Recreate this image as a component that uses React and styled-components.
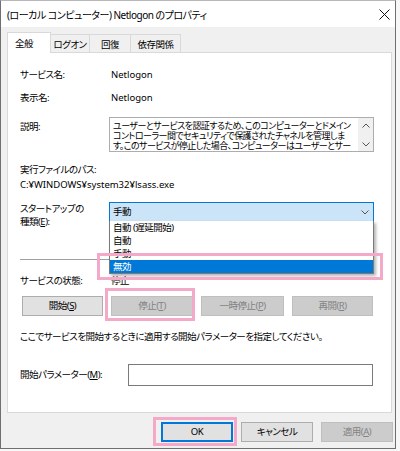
import React from "react";
import styled, { createGlobalStyle } from "styled-components";

const Page = createGlobalStyle`
  body {
    margin: 0;
    background: #f7f7f7;
    font-family: "Noto Sans", "Noto Sans CJK JP", sans-serif;
    font-size: 9.5px;
    letter-spacing: -0.5px;
    font-feature-settings: "palt";
    color: #000;
  }
`;

const Screen = styled.div`
  position: relative;
  width: 400px;
  height: 451px;
  overflow: hidden;
`;

const Window = styled.div`
  width: 396px;
  height: 449px;
  box-sizing: border-box;
  border: 1px solid #6f6f6f;
  border-top-color: #b8b8b8;
  display: flex;
  flex-direction: column;
  background: #f0f0f0;
`;

const TitleBar = styled.div`
  height: 26px;
  background: #fff;
  display: flex;
  align-items: center;
  justify-content: space-between;
  padding: 0 5px 0 6px;
  flex-shrink: 0;
`;

const Title = styled.span`
  font-size: 10px;
  line-height: 14px;
  margin-top: 1px;
`;

const Body = styled.div`
  flex: 1;
  display: flex;
  flex-direction: column;
  padding: 5px 2px 0 6px;
`;

const Tabs = styled.div`
  display: flex;
  align-items: flex-end;
  height: 20px;
  position: relative;
  z-index: 1;
`;

const Tab = styled.div`
  width: ${(p) => p.$w}px;
  height: ${(p) => (p.$active ? 21 : 18)}px;
  margin-bottom: ${(p) => (p.$active ? -1 : 0)}px;
  margin-left: ${(p) => (p.$first ? 0 : -1)}px;
  box-sizing: border-box;
  border: 1px solid #d9d9d9;
  border-bottom: none;
  background: ${(p) => (p.$active ? "#fff" : "#f0f0f0")};
  display: flex;
  align-items: center;
  justify-content: ${(p) => (p.$active ? "flex-start" : "center")};
  padding-left: ${(p) => (p.$active ? 7 : 0)}px;
  padding-bottom: ${(p) => (p.$active ? 1 : 0)}px;
  position: relative;
  z-index: ${(p) => (p.$active ? 2 : 1)};
`;

const Panel = styled.div`
  width: 385px;
  height: 361px;
  box-sizing: border-box;
  border: 1px solid #d9d9d9;
  background: #fff;
  padding: 15px 0 0 12px;
  display: flex;
  flex-direction: column;
`;

const Row = styled.div`
  display: flex;
  align-items: ${(p) => p.$align || "center"};
  margin-top: ${(p) => p.$mt || 0}px;
  line-height: 14px;
  position: relative;
`;

const Label = styled.span`
  width: ${(p) => p.$w || 89}px;
  flex-shrink: 0;
  line-height: ${(p) => p.$lh || 14}px;
  padding-top: ${(p) => p.$pt || 0}px;
`;

const Value = styled.span`
  padding-left: 2px;
  letter-spacing: ${(p) => (p.$latin ? "0" : "-0.5px")};
`;

const PathText = styled.div`
  margin-top: 1px;
  line-height: 14px;
  letter-spacing: 0;
`;

const U = styled.span`
  text-decoration: underline;
  text-underline-offset: 1px;
`;

const TextArea = styled.div`
  width: 265px;
  height: 35px;
  box-sizing: border-box;
  border: 1px solid #abadb3;
  display: flex;
`;

const TextLines = styled.div`
  flex: 1;
  padding: 3px 0 0 3px;
  font-size: 9px;
  letter-spacing: -0.55px;
  line-height: 10px;
  white-space: pre;
  overflow: hidden;
`;

const ScrollBar = styled.div`
  width: 15px;
  background: #f0f0f0;
  display: flex;
  flex-direction: column;
  align-items: center;
  justify-content: space-between;
  padding: 5px 0 4px;
`;

const Combo = styled.div`
  width: 265px;
  height: 20px;
  box-sizing: border-box;
  border: 1px solid #0078d7;
  background: #cce4f7;
  display: flex;
  align-items: center;
  justify-content: space-between;
  padding: 0 4px 0 3px;
`;

const DropList = styled.div`
  position: absolute;
  left: 89px;
  top: 19px;
  width: 265px;
  box-sizing: border-box;
  border: 1px solid #7a7a7a;
  border-top: none;
  background: #fff;
  box-shadow: 2px 2px 3px rgba(0, 0, 0, 0.3);
  z-index: 3;
`;

const Option = styled.div`
  height: 13px;
  line-height: 13px;
  padding-left: 3px;
  background: ${(p) => (p.$selected ? "#0078d7" : "transparent")};
  color: ${(p) => (p.$selected ? "#fff" : "#000")};
`;

const Separator = styled.div`
  width: 353px;
  height: 1px;
  background: #a0a0a0;
  margin-top: 31px;
`;

const ButtonRow = styled.div`
  display: flex;
  justify-content: space-between;
  width: 351px;
  margin: 8px 0 0 2px;
`;

const Button = styled.div`
  width: ${(p) => p.$w}px;
  height: 20px;
  box-sizing: border-box;
  border: 1px solid ${(p) => (p.$default ? "#0078d7" : p.$disabled ? "#bfbfbf" : "#adadad")};
  box-shadow: ${(p) => (p.$default ? "inset 0 0 0 1px #0078d7" : "none")};
  background: ${(p) => (p.$disabled ? "#cccccc" : "#e1e1e1")};
  color: ${(p) => (p.$disabled ? "#838383" : "#000")};
  display: flex;
  align-items: center;
  justify-content: center;
  line-height: 14px;
`;

const Hint = styled.div`
  margin-top: 14px;
  line-height: 14px;
`;

const Input = styled.div`
  width: 245px;
  height: 22px;
  box-sizing: border-box;
  border: 1px solid #7a7a7a;
  background: #fff;
`;

const Footer = styled.div`
  display: flex;
  justify-content: flex-end;
  gap: 8px;
  margin-top: 9px;
`;

const Mark = styled.div`
  position: absolute;
  left: ${(p) => p.$x}px;
  top: ${(p) => p.$y}px;
  width: ${(p) => p.$w}px;
  height: ${(p) => p.$h}px;
  box-sizing: border-box;
  border: 3px solid #f4a9c8;
  z-index: 10;
  pointer-events: none;
`;

const Chevron = ({ up }) => (
  <svg width="8" height="5" viewBox="0 0 8 5">
    <path
      d={up ? "M0.5 4.5 L4 1 L7.5 4.5" : "M0.5 0.5 L4 4 L7.5 0.5"}
      fill="none"
      stroke="#555"
      strokeWidth="1"
    />
  </svg>
);

const CloseIcon = () => (
  <svg width="11" height="11" viewBox="0 0 11 11">
    <path d="M0.5 0.5 L10.5 10.5 M10.5 0.5 L0.5 10.5" stroke="#111" strokeWidth="1" />
  </svg>
);

const description =
  "ユーザーとサービスを認証するため、このコンピューターとドメイン\nコントローラー間でセキュリティで保護されたチャネルを管理しま\nす。このサービスが停止した場合、コンピューターはユーザーとサー";

const startupOptions = ["自動 (遅延開始)", "自動", "手動", "無効"];

export default function App() {
  return (
    <Screen>
      <Page />
      <Window>
        <TitleBar>
          <Title>(ローカル コンピューター) Netlogon のプロパティ</Title>
          <CloseIcon />
        </TitleBar>
        <Body>
          <Tabs>
            <Tab $active $first $w={44}>全般</Tab>
            <Tab $w={40}>ログオン</Tab>
            <Tab $w={42}>回復</Tab>
            <Tab $w={51}>依存関係</Tab>
          </Tabs>
          <Panel>
            <Row>
              <Label>サービス名:</Label>
              <Value $latin>Netlogon</Value>
            </Row>
            <Row $mt={9}>
              <Label>表示名:</Label>
              <Value $latin>Netlogon</Value>
            </Row>
            <Row $mt={12} $align="flex-start">
              <Label $pt={3}>説明:</Label>
              <TextArea>
                <TextLines>{description}</TextLines>
                <ScrollBar>
                  <Chevron up />
                  <Chevron />
                </ScrollBar>
              </TextArea>
            </Row>
            <Row $mt={11}>
              <Label $w={200}>実行ファイルのパス:</Label>
            </Row>
            <PathText>C:¥WINDOWS¥system32¥lsass.exe</PathText>
            <Row $mt={10} $align="flex-start">
              <Label $lh={13}>
                スタートアップの
                <br />
                種類(<U>E</U>):
              </Label>
              <Combo>
                <span>手動</span>
                <Chevron />
              </Combo>
              <DropList>
                {startupOptions.map((o) => (
                  <Option key={o} $selected={o === "無効"}>
                    {o}
                  </Option>
                ))}
              </DropList>
            </Row>
            <Separator />
            <Row $mt={14}>
              <Label>サービスの状態:</Label>
              <Value>停止</Value>
            </Row>
            <ButtonRow>
              <Button $w={81}>
                開始(<U>S</U>)
              </Button>
              <Button $w={82} $disabled>
                停止(<U>T</U>)
              </Button>
              <Button $w={83} $disabled>
                一時停止(<U>P</U>)
              </Button>
              <Button $w={81} $disabled>
                再開(<U>R</U>)
              </Button>
            </ButtonRow>
            <Hint>ここでサービスを開始するときに適用する開始パラメーターを指定してください。</Hint>
            <Row $mt={20}>
              <Label $w={108}>
                開始パラメーター(<U>M</U>):
              </Label>
              <Input />
            </Row>
          </Panel>
          <Footer>
            <Button $w={72} $default>OK</Button>
            <Button $w={72}>キャンセル</Button>
            <Button $w={72} $disabled>
              適用(<U>A</U>)
            </Button>
          </Footer>
        </Body>
      </Window>
      <Mark $x={97} $y={253} $w={286} $h={27} />
      <Mark $x={105} $y={288} $w={90} $h={33} />
      <Mark $x={153} $y={417} $w={84} $h={29} />
    </Screen>
  );
}
